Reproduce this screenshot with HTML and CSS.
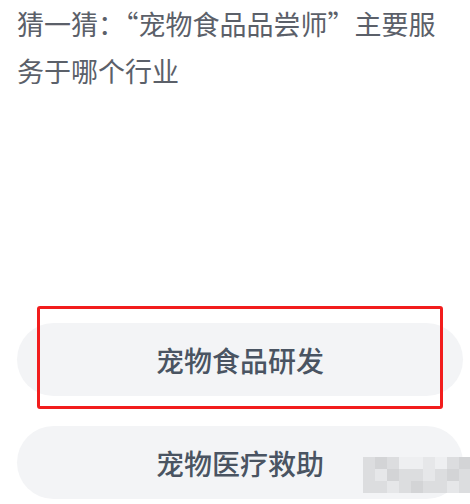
FILE: index.html
```html
<!DOCTYPE html>
<html lang="zh-CN">
    <head>
        <meta charset="UTF-8" />
        <meta name="viewport" content="width=device-width, initial-scale=1.0" />
        <title>猜一猜</title>
        <link rel="stylesheet" href="styles.css">
    </head>
    <body>
        <div class="quiz_container">
            <p class="question">猜一猜：“宠物食品品尝师”主要服务于哪个行业</p>

            <div class="options">
                <div class="option_wrap">
                    <button class="option">宠物食品研发</button>
                    <div class="highlight"></div>
                </div>
                <div class="option_wrap">
                    <button class="option">宠物医疗救助</button>
                    <div class="mosaic">
                        <span class="c2"></span><span class="c3"></span><span class="c2"></span><span class="c0"></span><span class="c0"></span><span class="c1"></span><span class="c0"></span><span class="c2"></span><span class="c3"></span>
                        <span class="c2"></span><span class="c1"></span><span class="c3"></span><span class="c2"></span><span class="c2"></span><span class="c1"></span><span class="c2"></span><span class="c3"></span><span class="c2"></span>
                        <span class="c2"></span><span class="c2"></span><span class="c1"></span><span class="c2"></span><span class="c3"></span><span class="c2"></span><span class="c2"></span><span class="c1"></span><span class="c2"></span>
                    </div>
                </div>
            </div>
        </div>
    </body>
</html>
```

FILE: styles.css
```css
body {
    margin: 0;
    background: #ffffff;
    font-family: "Noto Sans CJK SC", "Noto Sans", sans-serif;
    overflow: hidden;
}

.quiz_container {
    padding: 0 7px 0 17px;
}

.question {
    margin: 0;
    max-width: 440px;
    font-size: 27px;
    line-height: 47px;
    color: #5b6069;
    font-feature-settings: "fwid";
}

.options {
    margin-top: 229px;
    display: flex;
    flex-direction: column;
    gap: 30px;
}

.option_wrap {
    position: relative;
}

.option {
    display: block;
    width: 100%;
    height: 73px;
    border: none;
    border-radius: 37px;
    background: #f3f4f6;
    font-family: inherit;
    font-size: 28px;
    font-weight: 500;
    color: #4a5462;
}

.highlight {
    position: absolute;
    top: -17px;
    bottom: -13px;
    left: 20px;
    right: 20px;
    border: 3px solid #f21d1d;
    border-radius: 3px;
}

.mosaic {
    position: absolute;
    top: 31px;
    left: 346px;
    display: grid;
    grid-template-columns: repeat(9, 12px);
    grid-auto-rows: 12px;
}

.mosaic span {
    display: block;
}

.c0 { background: #eeeff1; }
.c1 { background: #e6e7e9; }
.c2 { background: #dcdddf; }
.c3 { background: #d3d4d6; }
```
